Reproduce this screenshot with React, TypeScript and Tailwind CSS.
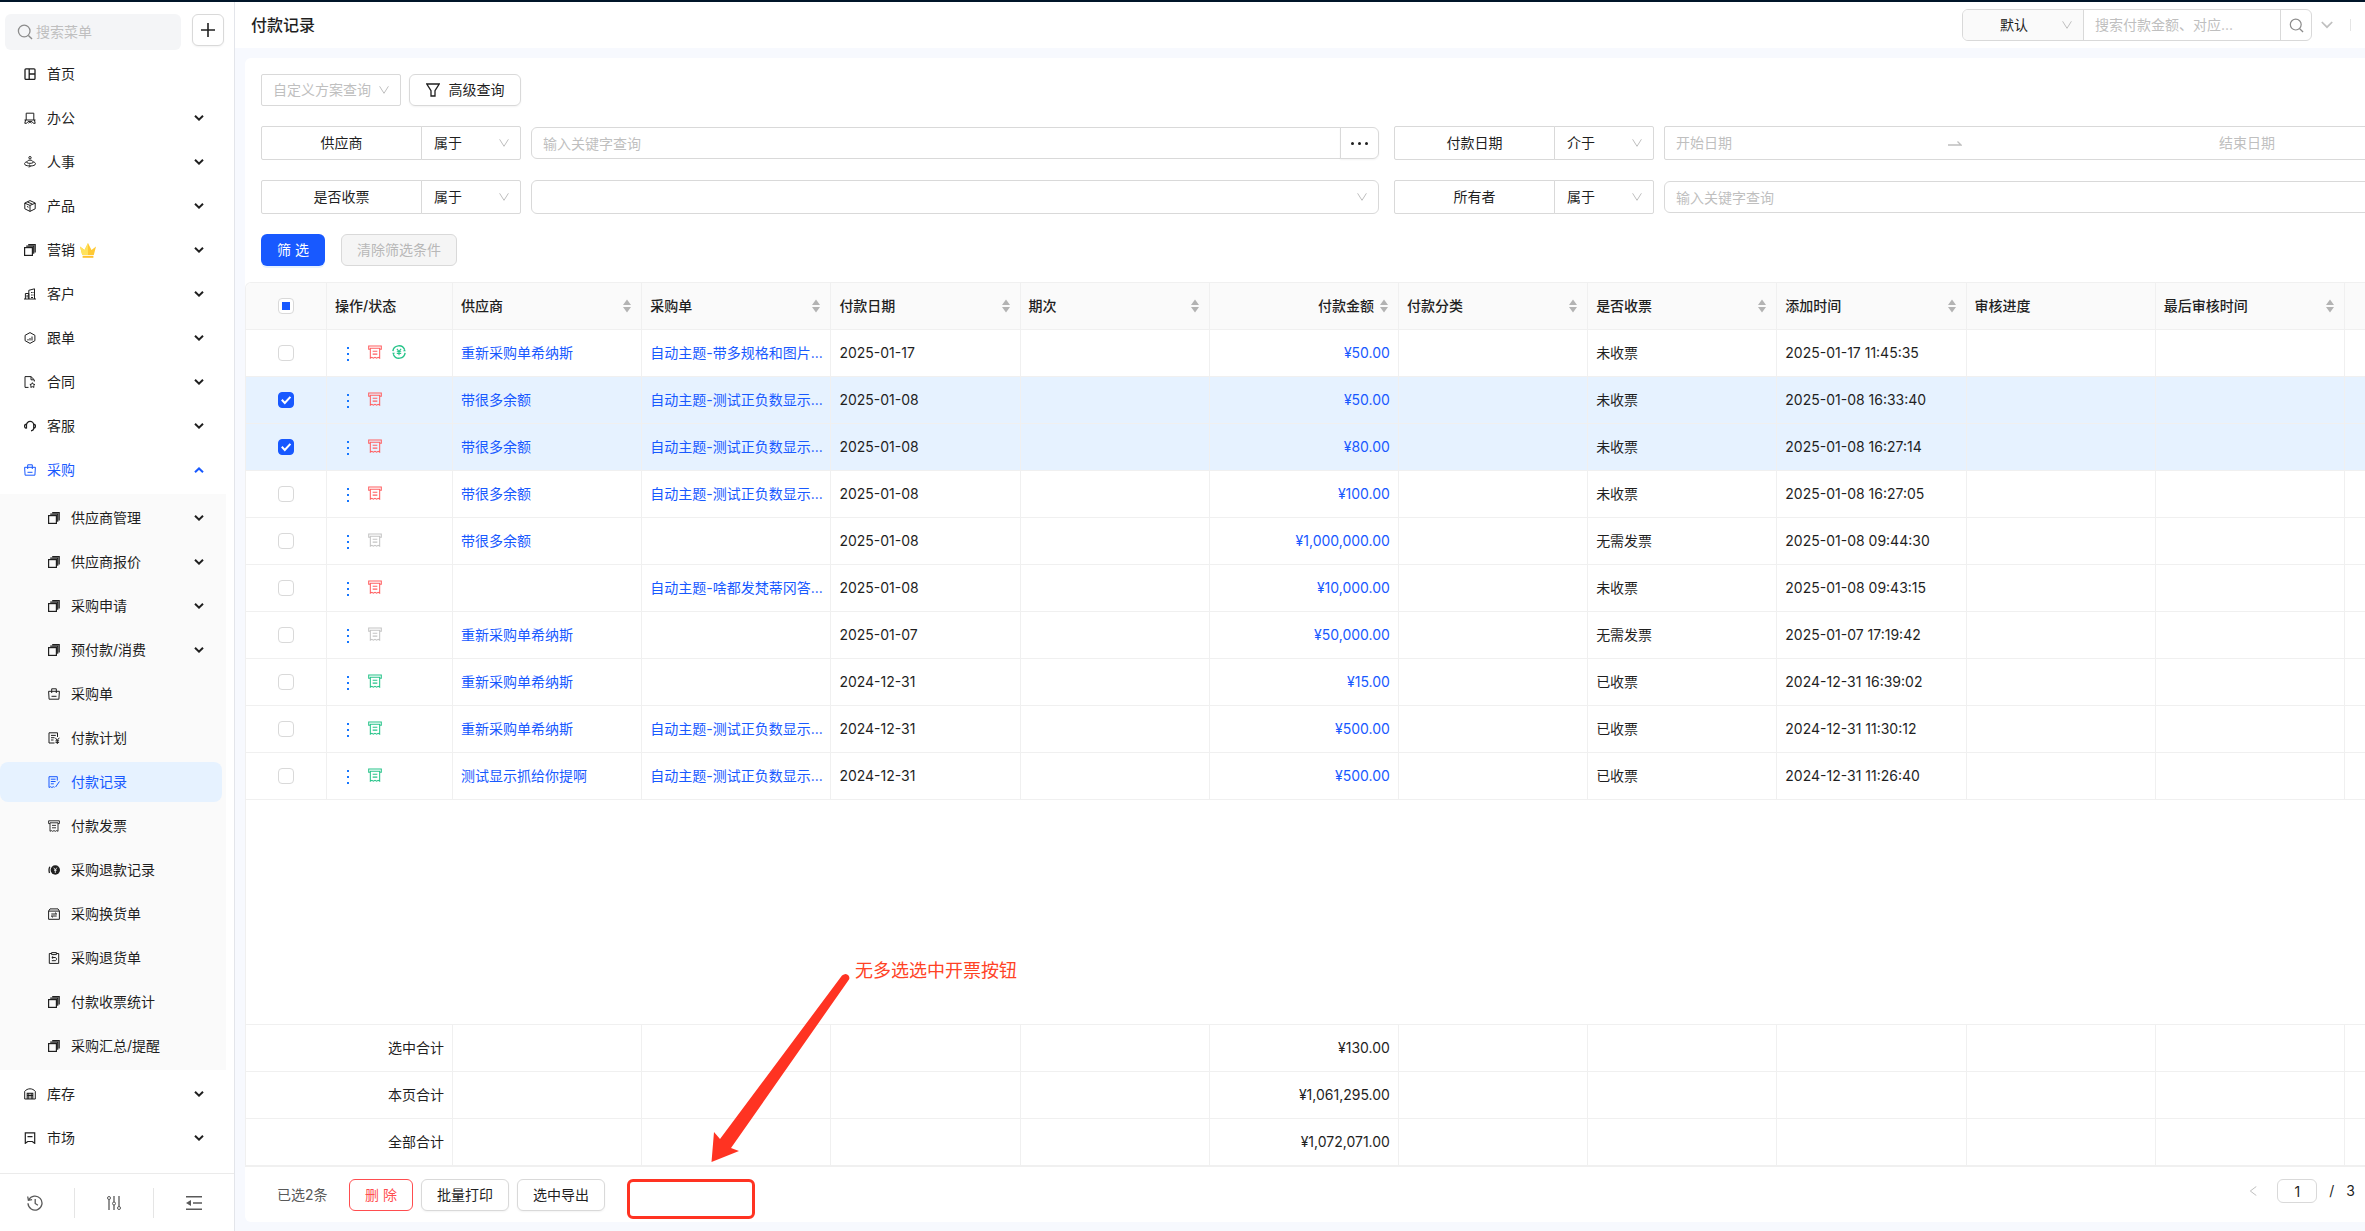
import { useState } from "react";
import type { ReactNode } from "react";

type IconProps = { className?: string };

const Svg = ({ children, className = "size-3", box = "0 0 12 12" }: IconProps & { children: ReactNode; box?: string }) => (
  <svg viewBox={box} className={`shrink-0 ${className}`} fill="none" stroke="currentColor" strokeWidth="1" aria-hidden="true">
    {children}
  </svg>
);

const HomeIcon = () => (
  <Svg><rect x="1" y=".8" width="10" height="10.6" rx="1" strokeWidth="1.3" /><path d="M5.2 1v10M5.2 6H11" strokeWidth="1.3" /></Svg>
);
const OfficeIcon = () => (
  <Svg><path d="M2.2 8V1.2h7.6V8M.5 8h11M1.6 8 .8 11.3h1.8L4 9.6h4l1.4 1.7h1.8L10.4 8M4.5 11.2 6 9.8l1.5 1.4" /></Svg>
);
const PeopleIcon = () => (
  <Svg><circle cx="6" cy="1.7" r="1.2" /><path d="M2.8 6.6c0-1.6 1.4-2.5 3.2-2.5s3.2.9 3.2 2.5c-1.5 1-4.9 1-6.4 0Z" /><path d="M2.6 5.8C1.2 6.3.5 7 .5 7.8c0 1.3 2.3 2.2 5.5 2.2s5.5-.9 5.5-2.2c0-.8-.7-1.5-2.1-2M5 8.6l1.4 1.3L5 11.5" /></Svg>
);
const BoxIcon = () => (
  <Svg><path d="M6 .6 11.2 3v5.8L6 11.4.8 8.800V3L6 .6ZM.8 3.200 6 5.400l5.200-2.200M6 5.400v6M3.300 1.900l5 2.200M3 6.500l1.500.7" /></Svg>
);
const StackIcon = () => (
  <Svg><rect x=".6" y="3.600" width="7.800" height="7.800" strokeWidth="1.200" /><path d="M2.200 2.200h7.500v7.600M4.200.7h7v7.800" strokeWidth="1.200" /></Svg>
);
const BuildingIcon = () => (
  <Svg><path d="M0 11h12M1.400 11V5.500h3.400V11M4.800 11V2.300L10.500.8V11M3.100 7v2.500M7.600 4v1M7.600 6.500v1M9 4v1M9 6.500v1M7 9.500h2" /></Svg>
);
const TrackIcon = () => (
  <Svg><path d="M6 .6 10.900 3.300v5.400L6 11.400 1.100 8.700V3.300L6 .6ZM4 8.500V7M6 8.500V6M8 8.500V4.500" /></Svg>
);
const ContractIcon = () => (
  <Svg><path d="M4.500 11.400H1V.6h6l3.300 3.200v1.700M7 .8v3h3" /><path d="m8.400 6.700.8 1.500 1.700.3-1.200 1.200.2 1.700-1.500-.7-1.600.7.3-1.700-1.200-1.200 1.700-.3.800-1.500Z" /></Svg>
);
const ServiceIcon = () => (
  <Svg><path d="M2.500 8.500V5a3.600 3.600 0 0 1 7.200 0v3.200c0 1.500-1 2.400-2.700 2.600M2.300 4.200C1.100 4.400.5 5.200.5 6.200s.6 1.900 1.900 2.200M9.800 4.200c1.200.2 1.700 1 1.700 2s-.5 1.800-1.700 2.100" strokeWidth="1.200" /></Svg>
);
const BagIcon = () => (
  <Svg><path d="M.6 3.300h10.800l-.5 7.900H1.100L.6 3.300ZM3.700 5V.8h4.600V5M3.500 8.300h5" /></Svg>
);
const PlanIcon = () => (
  <Svg><path d="M6.500 11H1V.8h8.500V5M3 3.400h4.800M3 5.700h3.500M3 8h2.500M7.300 5.800l2 2.500 2-2.500M9.300 8.300V12M7.500 8.800h3.600M7.500 10.400h3.600" /></Svg>
);
const RecordIcon = () => (
  <Svg><path d="M9.300 4.500V.7H1v10.800l1.500-.8 1.400.8 1.400-.8 1.200.6M2.800 3.200h4.800M2.800 5.500h4.800M2.800 7.800h3M11.400 5.500 7.600 11" /></Svg>
);
const InvoiceIcon = ({ className = "size-3" }: IconProps) => (
  <Svg className={className}><path d="M2 3.600H.6V.8h10.800v2.800H10M2 2.800h8v8.500l-1.300-.7-1.300.7-1.400-.7-1.400.7-1.300-.7-1.300.7V2.800ZM4 5.400h4M4 7.800h4" strokeWidth=".9" /></Svg>
);
const RefundIcon = () => (
  <Svg><circle cx="7.300" cy="6" r="4.700" fill="currentColor" stroke="none" /><path d="M5.800 3.700 7.300 6l1.500-2.300M7.300 6v3M6 6.300h2.600" stroke="white" strokeWidth=".8" /><path d="M1.800 2.800C.9 4.500.9 7 1.500 9" strokeWidth="1.300" /></Svg>
);
const ExchangeIcon = () => (
  <Svg><path d="M2 .9h8L11.400 3v8.300H.6V3L2 .9ZM.8 3.100h10.400M3.300 6h5.400L7 4.600M8.700 8H3.300L5 9.400" /></Svg>
);
const ReturnIcon = () => (
  <Svg><path d="M3.500 1.500H1.300v9.900h9.400V1.500H8.500M3.600.6h4.800v2H3.600zM5.200 4.300 3.800 5.500l1.400 1.200M4 5.500h3c2 0 2 3.200 0 3.200H3.800" /></Svg>
);
const WarehouseIcon = () => (
  <Svg><path d="M.7 11V3.300C2 1.800 4 .8 6 .8s4 1 5.300 2.500V11H.7Z" /><path d="M3.200 11V5.200h5.600V11M4.800 5.500V11M7.200 5.500V11M3.200 7.500h5.600" strokeWidth="1.100" /></Svg>
);
const MarketIcon = () => (
  <Svg><path d="M1.300.8h9.400v10.500L8.300 9.500H3.700l-2.400 1.800V.8ZM3.500 4.600h5" strokeWidth="1.200" /></Svg>
);
const YuanCycleIcon = () => (
  <Svg box="0 0 14 14" className="size-3.5">
    <path d="M.9 6.200A6.100 6.100 0 0 1 12.600 4.600M13.100 7.800A6.100 6.100 0 0 1 1.400 9.400" strokeWidth="1.400" />
    <path d="M13.700 6.300h-2.600l1.600-2.600ZM.3 7.700h2.600l-1.600 2.600Z" fill="currentColor" stroke="none" />
    <path d="m4.900 3.900 2.100 2.600 2.100-2.600M7 6.500v3.700M4.800 6.800h4.400M4.800 8.500h4.400" strokeWidth="1.100" />
  </Svg>
);
const CrownIcon = () => (
  <svg viewBox="0 0 16 16" className="size-4 shrink-0" aria-hidden="true">
    <path d="M0 4.500 4.500 8 8 1l3.500 7L16 4.500 13.800 13H2.200L0 4.500Z" fill="#ffc933" />
    <path d="M0 4.500 4.500 8 8 1v12H2.200L0 4.500Z" fill="#ffe25c" />
    <path d="M2.600 13.800h10.800v2H2.600z" fill="#ffc02e" />
  </svg>
);
const MenuChevron = ({ up = false }: { up?: boolean }) => (
  <Svg box="0 0 10 8" className="h-2 w-2.5"><path d={up ? "M1 6.200 5 2.400l4 3.800" : "M1 1.800 5 5.600l4-3.800"} strokeWidth="2" /></Svg>
);
const ThinChevron = () => (
  <Svg box="0 0 10 10" className="size-2.5 text-[#bfbfbf]"><path d="M.6 1.300 5 8.300l4.400-7" /></Svg>
);
const SearchIcon = ({ className = "size-4" }: IconProps) => (
  <Svg box="0 0 16 16" className={className}><circle cx="7.200" cy="7" r="5.800" strokeWidth="1.300" /><path d="m11.400 11.400 3.600 3.600" strokeWidth="1.400" /></Svg>
);

type Item = { label: string; icon: ReactNode; arrow?: boolean; vip?: boolean };

const topItems: Item[] = [
  { label: "首页", icon: <HomeIcon /> },
  { label: "办公", icon: <OfficeIcon />, arrow: true },
  { label: "人事", icon: <PeopleIcon />, arrow: true },
  { label: "产品", icon: <BoxIcon />, arrow: true },
  { label: "营销", icon: <StackIcon />, arrow: true, vip: true },
  { label: "客户", icon: <BuildingIcon />, arrow: true },
  { label: "跟单", icon: <TrackIcon />, arrow: true },
  { label: "合同", icon: <ContractIcon />, arrow: true },
  { label: "客服", icon: <ServiceIcon />, arrow: true },
  { label: "采购", icon: <BagIcon />, arrow: true },
];
const subItems: Item[] = [
  { label: "供应商管理", icon: <StackIcon />, arrow: true },
  { label: "供应商报价", icon: <StackIcon />, arrow: true },
  { label: "采购申请", icon: <StackIcon />, arrow: true },
  { label: "预付款/消费", icon: <StackIcon />, arrow: true },
  { label: "采购单", icon: <BagIcon /> },
  { label: "付款计划", icon: <PlanIcon /> },
  { label: "付款记录", icon: <RecordIcon /> },
  { label: "付款发票", icon: <InvoiceIcon /> },
  { label: "采购退款记录", icon: <RefundIcon /> },
  { label: "采购换货单", icon: <ExchangeIcon /> },
  { label: "采购退货单", icon: <ReturnIcon /> },
  { label: "付款收票统计", icon: <StackIcon /> },
  { label: "采购汇总/提醒", icon: <StackIcon /> },
];
const bottomItems: Item[] = [
  { label: "库存", icon: <WarehouseIcon />, arrow: true },
  { label: "市场", icon: <MarketIcon />, arrow: true },
];

function MenuItem({ item, sub = false }: { item: Item; sub?: boolean }) {
  const open = item.label === "采购";
  const current = item.label === "付款记录";
  return (
    <a
      href="#"
      className={`mr-3 flex h-10 items-center rounded-lg pr-[18px] ${sub ? "pl-12" : "pl-6"} ${current ? "bg-[#e6f2ff]" : ""} ${open || current ? "text-[#1859ff]" : "text-[#1f1f1f]"}`}
    >
      {item.icon}
      <span className="ml-[11px]">{item.label}</span>
      {item.vip && <span className="ml-[5px]"><CrownIcon /></span>}
      {item.arrow && <span className="ml-auto"><MenuChevron up={open} /></span>}
    </a>
  );
}

function Sidebar() {
  return (
    <aside className="flex w-[235px] shrink-0 flex-col border-r border-[#e3e5ea] bg-white">
      <div className="flex gap-[11px] pt-3 pl-[5px]">
        <label className="flex h-9 w-44 items-center gap-[3px] rounded-md bg-[#f4f5f7] pl-3 text-[#8c8c8c]">
          <SearchIcon />
          <input aria-label="搜索菜单" placeholder="搜索菜单" className="w-full bg-transparent outline-none placeholder:text-[#bfbfbf]" />
        </label>
        <button aria-label="新增" className="flex size-8 items-center justify-center rounded-md border border-[#d9d9d9] bg-white text-[#1f1f1f] shadow-xs">
          <Svg box="0 0 14 14" className="size-3.5"><path d="M7 0v14M0 7h14" strokeWidth="1.600" /></Svg>
        </button>
      </div>
      <nav className="mt-1 flex flex-col gap-1">
        {topItems.map((i) => <MenuItem key={i.label} item={i} />)}
        <div className="mr-2 flex flex-col gap-1 bg-[#fafafa] py-1">
          {subItems.map((i) => <div key={i.label} className="-mr-2"><MenuItem item={i} sub /></div>)}
        </div>
        {bottomItems.map((i) => <MenuItem key={i.label} item={i} />)}
      </nav>
      <div className="mt-auto flex h-[58px] items-center border-t border-[#ebebeb] text-[#595959]">
        <button aria-label="历史" className="flex h-[30px] w-[75px] items-center justify-center border-r border-[#e5e5e5] pr-1">
          <Svg box="0 0 16 16" className="size-4"><path d="M1.800 4.800A7 7 0 1 1 1 8.300M.7 1.500l.7 3.800 3.700-.6M8.200 4v4.500l2.700 1.800" strokeWidth="1.300" /></Svg>
        </button>
        <button aria-label="设置" className="flex h-[30px] w-20 items-center justify-center border-r border-[#e5e5e5]">
          <Svg box="0 0 14 14" className="size-3.5"><circle cx="2" cy="2" r="1.500" /><circle cx="7" cy="7.500" r="1.500" /><circle cx="12" cy="12" r="1.500" /><path d="M2 3.500V14M7 0v6M7 9v5M12 0v10.500" strokeWidth="1.300" /></Svg>
        </button>
        <button aria-label="收起" className="flex h-[30px] w-20 items-center justify-center">
          <Svg box="0 0 16 16" className="size-4"><path d="M0 1.700h16M7 8h9M0 14.300h16" strokeWidth="1.400" /><path d="m0 8 5-3v6Z" fill="currentColor" stroke="none" /></Svg>
        </button>
      </div>
    </aside>
  );
}

function Condition({ label, op, children }: { label: string; op: string; children: ReactNode }) {
  return (
    <div className="flex h-[34px] items-center">
      <span className="flex h-full w-[161px] shrink-0 items-center justify-center rounded-l-xs border border-[#d9d9d9]">{label}</span>
      <div className="relative -ml-px h-full w-[100px] shrink-0">
        <select aria-label={`${label}条件`} className="h-full w-full appearance-none rounded-r-xs border border-[#d9d9d9] bg-white pl-3">
          <option>{op}</option>
        </select>
        <span className="pointer-events-none absolute inset-y-0 right-3 flex items-center"><ThinChevron /></span>
      </div>
      <div className="ml-[10px] flex min-w-0 flex-1 items-center">{children}</div>
    </div>
  );
}

const fieldClass = "h-8 w-full min-w-0 border border-[#d9d9d9] bg-white px-[11px] outline-none placeholder:text-[#bfbfbf]";

function Filters() {
  return (
    <div className="px-4 pt-4 pb-4">
      <div className="flex gap-2">
        <div className="relative">
          <select aria-label="自定义方案查询" className="h-8 w-[140px] appearance-none rounded-xs border border-[#d9d9d9] bg-white pl-[11px] text-[#bfbfbf]">
            <option>自定义方案查询</option>
          </select>
          <span className="pointer-events-none absolute inset-y-0 right-3 flex items-center"><ThinChevron /></span>
        </div>
        <button className="flex h-8 w-28 items-center justify-center gap-[9px] rounded-md border border-[#d9d9d9] shadow-xs">
          <Svg box="0 0 14 14" className="size-3.5"><path d="M.8 1h12.400L9 7.600V13H5V7.600L.8 1Z" strokeWidth="1.300" /></Svg>
          高级查询
        </button>
      </div>
      <div className="mt-5 -mr-[163px] grid grid-cols-2 gap-x-[15px] gap-y-5">
        <Condition label="供应商" op="属于">
          <input aria-label="供应商" placeholder="输入关键字查询" className={`${fieldClass} rounded-l-md`} />
          <button aria-label="更多" className="-ml-px flex h-8 w-[39px] shrink-0 items-center justify-center gap-1 rounded-r-md border border-[#d9d9d9] shadow-xs">
            <i className="size-[3px] rounded-full bg-[#1f1f1f]" /><i className="size-[3px] rounded-full bg-[#1f1f1f]" /><i className="size-[3px] rounded-full bg-[#1f1f1f]" />
          </button>
        </Condition>
        <Condition label="付款日期" op="介于">
          <div className="flex h-[34px] w-full items-center rounded-xs border border-[#d9d9d9] px-[11px]">
            <input aria-label="开始日期" placeholder="开始日期" className="w-[272px] outline-none placeholder:text-[#bfbfbf]" />
            <Svg box="0 0 14 8" className="h-2 w-3.5 text-[#bfbfbf]"><path d="M0 6h13L9.500 2.500" strokeWidth="1.300" /></Svg>
            <input aria-label="结束日期" placeholder="结束日期" className="w-0 flex-1 pl-8 text-center outline-none placeholder:text-[#bfbfbf]" />
          </div>
        </Condition>
        <Condition label="是否收票" op="属于">
          <div className="relative w-full">
            <select aria-label="是否收票" className="h-[34px] w-full appearance-none rounded-md border border-[#d9d9d9] bg-white px-3">
              <option></option>
            </select>
            <span className="pointer-events-none absolute inset-y-0 right-3 flex items-center"><ThinChevron /></span>
          </div>
        </Condition>
        <Condition label="所有者" op="属于">
          <input aria-label="所有者" placeholder="输入关键字查询" className={`${fieldClass} rounded-md`} />
        </Condition>
      </div>
      <div className="mt-5 flex gap-4">
        <button className="h-8 w-16 rounded-md bg-[#1859ff] text-white shadow-[0_2px_0_#e6f2ff]">筛 选</button>
        <button disabled className="h-8 w-[116px] rounded-md border border-[#d9d9d9] bg-[#f5f5f5] text-[#b8b8b8]">清除筛选条件</button>
      </div>
    </div>
  );
}

function Check({ label, checked, onChange, partial = false }: { label: string; checked: boolean; onChange: () => void; partial?: boolean }) {
  return (
    <span className="relative mx-auto grid size-4">
      <input
        type="checkbox"
        aria-label={label}
        checked={checked}
        onChange={onChange}
        className="peer size-4 appearance-none rounded-sm border border-[#d9d9d9] bg-white checked:border-[#1859ff] checked:bg-[#1859ff]"
      />
      {partial && <i className="pointer-events-none absolute inset-1 bg-[#1859ff]" />}
      <svg viewBox="0 0 16 16" className="pointer-events-none absolute inset-0 hidden size-4 peer-checked:block" fill="none" stroke="white" strokeWidth="2" aria-hidden="true">
        <path d="m3.800 7.800 3 3.200 5.600-6.200" />
      </svg>
    </span>
  );
}

const tones = { red: "text-[#ff5f61]", gray: "text-[#c4c4c4]", green: "text-[#27c48a]" };
type Row = [keyof typeof tones, string, string, string, string, string, string];
const A = "重新采购单希纳斯";
const B = "带很多余额";
const T = "自动主题-测试正负数显示...";
const rows: Row[] = [
  ["red", A, "自动主题-带多规格和图片...", "2025-01-17", "¥50.00", "未收票", "2025-01-17 11:45:35"],
  ["red", B, T, "2025-01-08", "¥50.00", "未收票", "2025-01-08 16:33:40"],
  ["red", B, T, "2025-01-08", "¥80.00", "未收票", "2025-01-08 16:27:14"],
  ["red", B, T, "2025-01-08", "¥100.00", "未收票", "2025-01-08 16:27:05"],
  ["gray", B, "", "2025-01-08", "¥1,000,000.00", "无需发票", "2025-01-08 09:44:30"],
  ["red", "", "自动主题-啥都发梵蒂冈答...", "2025-01-08", "¥10,000.00", "未收票", "2025-01-08 09:43:15"],
  ["gray", A, "", "2025-01-07", "¥50,000.00", "无需发票", "2025-01-07 17:19:42"],
  ["green", A, "", "2024-12-31", "¥15.00", "已收票", "2024-12-31 16:39:02"],
  ["green", A, T, "2024-12-31", "¥500.00", "已收票", "2024-12-31 11:30:12"],
  ["green", "测试显示抓给你提啊", T, "2024-12-31", "¥500.00", "已收票", "2024-12-31 11:26:40"],
];
const columns = ["供应商", "采购单", "付款日期", "期次", "付款金额", "付款分类", "是否收票", "添加时间", "审核进度", "最后审核时间"];
const totals = [["选中合计", "¥130.00"], ["本页合计", "¥1,061,295.00"], ["全部合计", "¥1,072,071.00"]];

const Cols = () => (
  <colgroup>
    <col className="w-[81px]" />
    <col className="w-[126px]" />
    {columns.map((c) => <col key={c} />)}
    <col className="w-5" />
  </colgroup>
);
const cell = "h-[47px] border-r border-b border-[#f0f0f0] px-2";

const Sorter = () => (
  <svg viewBox="0 0 8 14" className="h-3.5 w-2 shrink-0 fill-[#b3b3b3]" aria-hidden="true"><path d="M4 .5 8 6H0ZM4 13.500 8 8H0Z" /></svg>
);

function DataTable() {
  const [picked, setPicked] = useState<number[]>([1, 2]);
  const toggle = (n: number) => setPicked((p) => (p.includes(n) ? p.filter((x) => x !== n) : [...p, n]));
  const all = picked.length === rows.length;
  return (
    <table className="w-full table-fixed border-separate border-spacing-0 rounded-tl-md border-t border-l border-[#f0f0f0]">
      <Cols />
      <thead className="bg-[#fafafa]">
        <tr className="text-left">
          <th className={cell + " rounded-tl-md"}>
            <span className="flex"><Check label="全选" checked={all} partial={picked.length > 0 && !all} onChange={() => setPicked(all ? [] : rows.map((_, n) => n))} /></span>
          </th>
          <th className={cell + " font-medium"}>操作/状态</th>
          {columns.map((c) => (
            <th key={c} className={cell + " font-medium"}>
              <span className={`flex items-center gap-1.5 ${c === "付款金额" ? "justify-end" : "justify-between"}`}>
                {c}{c !== "审核进度" && <button aria-label={`${c}排序`} className="mr-0.5"><Sorter /></button>}
              </span>
            </th>
          ))}
          <th className="h-[47px] border-b border-[#f0f0f0]" />
        </tr>
      </thead>
      <tbody>
        {rows.map(([tone, supplier, order, date, amount, status, time], n) => (
          <tr key={n} className={picked.includes(n) ? "bg-[#e6f2ff]" : ""}>
            <td className={cell}><span className="flex"><Check label={`选择第${n + 1}行`} checked={picked.includes(n)} onChange={() => toggle(n)} /></span></td>
            <td className={cell}>
              <span className="flex items-center">
                <button aria-label="更多操作" className="ml-3 flex flex-col gap-1 pt-0.5 text-[#1677ff]">
                  <i className="size-0.5 bg-current" /><i className="size-0.5 bg-current" /><i className="size-0.5 bg-current" />
                </button>
                <span className={`-mt-0.5 ml-[19px] ${tones[tone]}`}><InvoiceIcon className="size-3.5" /></span>
                {n === 0 && <span className="-mt-0.5 ml-[10px] text-[#27c48a]"><YuanCycleIcon /></span>}
              </span>
            </td>
            <td className={cell}><a href="#" className="text-[#1859ff]">{supplier}</a></td>
            <td className={cell + " whitespace-nowrap"}><a href="#" className="text-[#1859ff]">{order}</a></td>
            <td className={cell}>{date}</td>
            <td className={cell} />
            <td className={cell + " text-right"}><a href="#" className="text-[#1859ff]">{amount}</a></td>
            <td className={cell} />
            <td className={cell}>{status}</td>
            <td className={cell + " whitespace-nowrap"}>{time}</td>
            <td className={cell} />
            <td className={cell} />
            <td className="border-b border-[#f0f0f0]" />
          </tr>
        ))}
      </tbody>
    </table>
  );
}

function TotalsTable() {
  return (
    <table className="w-full table-fixed border-separate border-spacing-0 border-t border-b border-l border-[#f0f0f0]">
      <Cols />
      <tbody>
        {totals.map(([label, sum]) => (
          <tr key={label}>
            <th colSpan={2} className={cell + " text-right font-normal"}>{label}</th>
            {columns.map((c) => <td key={c} className={cell + " text-right"}>{c === "付款金额" ? sum : ""}</td>)}
            <td className="border-b border-[#f0f0f0]" />
          </tr>
        ))}
      </tbody>
    </table>
  );
}

function Annotation() {
  return (
    <div className="relative ml-[22px] h-10 w-32 rounded-md border-3 border-[#ff3322]">
      <svg viewBox="0 0 140 192" className="pointer-events-none absolute bottom-[50px] left-[80px] h-48 w-[140px]" fill="#ff3322" aria-hidden="true">
        <path d="M1.500 188 4 158l6 7L132 1.500q4-3 6.500 0 1.500 2 .5 4L21 174l8 3Z" />
      </svg>
      <span className="absolute bottom-[231px] left-[225px] text-lg whitespace-nowrap text-[#ff4326]">无多选选中开票按钮</span>
    </div>
  );
}

const plain = "h-8 w-[88px] rounded-md border border-[#d9d9d9] bg-white shadow-xs";

export default function App() {
  return (
    <div className="flex min-h-screen flex-col overflow-hidden border-t-2 border-[#001529] bg-white font-['Inter','Noto_Sans_CJK_SC',sans-serif] text-sm text-[#1f1f1f]">
      <div className="flex flex-1">
        <Sidebar />
        <main className="flex min-w-0 flex-1 flex-col bg-[#f7f9fe]">
          <header className="flex h-[46px] items-center bg-white pr-[14px] pl-4">
            <h1 className="text-base font-medium">付款记录</h1>
            <div className="ml-auto flex h-8 items-stretch overflow-hidden rounded-md border border-[#d9d9d9]">
              <div className="relative">
                <select aria-label="查询方案" className="h-full w-[121px] appearance-none border-r border-[#d9d9d9] bg-[#fafafa] pl-[37px]">
                  <option>默认</option>
                </select>
                <span className="pointer-events-none absolute inset-y-0 right-3 flex items-center"><ThinChevron /></span>
              </div>
              <input aria-label="搜索" placeholder="搜索付款金额、对应..." className="w-[196px] pl-[11px] outline-none placeholder:text-[#bfbfbf]" />
              <button aria-label="搜索" className="flex w-[31px] items-center justify-center border-l border-[#d9d9d9] text-[#8c8c8c]"><SearchIcon className="size-[15px]" /></button>
            </div>
            <button aria-label="展开" className="ml-[9px] text-[#bfbfbf]">
              <Svg box="0 0 12 8" className="h-2 w-3"><path d="m.8 1 5.200 5.200L11.200 1" strokeWidth="1.700" /></Svg>
            </button>
            <span className="ml-[17px] h-3 w-px bg-[#e5e5e5]" />
          </header>
          <section className="mt-[10px] mb-[9px] ml-[10px] flex flex-1 flex-col rounded-l-md bg-white">
            <Filters />
            <DataTable />
            <div className="min-h-8 flex-1 border-l border-[#f0f0f0]" />
            <TotalsTable />
            <footer className="flex h-[55px] items-center pr-2.5 pl-8">
              <span className="w-[72px] text-[#595959]">已选2条</span>
              <button className="h-8 w-16 rounded-md border border-[#ff4d4f] bg-white text-[#ff4d4f]">删 除</button>
              <button className={plain + " ml-2"}>批量打印</button>
              <button className={plain + " ml-2"}>选中导出</button>
              <div className="pt-2"><Annotation /></div>
              <nav aria-label="分页" className="mt-3 ml-auto flex items-center self-start">
                <button aria-label="上一页" className="mr-5 text-[#bfbfbf]"><Svg box="0 0 8 10" className="h-2.5 w-2"><path d="M7.300.5 1.300 5l6 4.500" /></Svg></button>
                <input aria-label="页码" defaultValue="1" className="h-6 w-10 rounded-md border border-[#d9d9d9] text-center outline-none" />
                <span className="ml-3">/</span>
                <span className="ml-3">3</span>
              </nav>
            </footer>
          </section>
        </main>
      </div>
    </div>
  );
}
